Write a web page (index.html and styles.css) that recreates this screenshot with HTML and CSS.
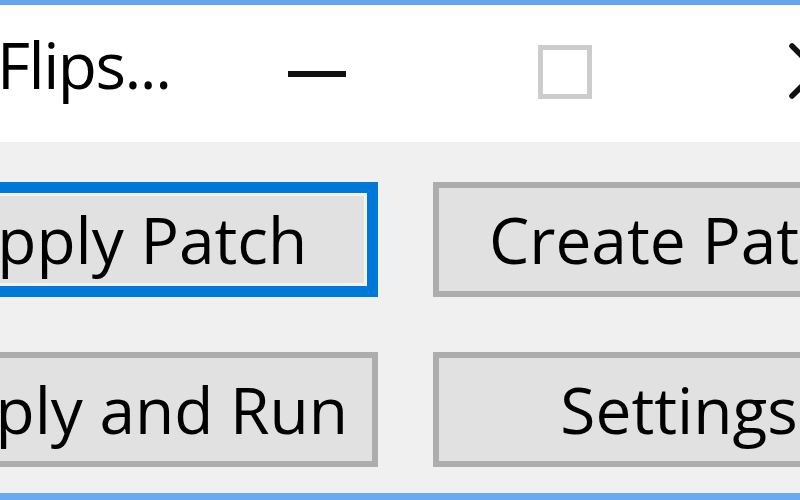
FILE: index.html
```html
<!DOCTYPE html>
<html>
<head>
<meta charset="utf-8">
<link rel="stylesheet" href="styles.css">
</head>
<body>
<div class="window">
  <div class="titlebar">
    <div class="title">Flips...</div>
    <div class="caption">
      <svg class="glyph-min" width="58" height="6" viewBox="0 0 58 6"><rect width="58" height="6" fill="#111"/></svg>
    </div>
    <div class="caption">
      <svg class="glyph-max" width="54" height="54" viewBox="0 0 54 54"><rect x="2.5" y="2.5" width="49" height="49" fill="none" stroke="#cccccc" stroke-width="5"/></svg>
    </div>
    <div class="caption">
      <svg class="glyph-close" width="56" height="56" viewBox="0 0 56 56"><path d="M3 3 L53 53 M53 3 L3 53" stroke="#111" stroke-width="5.5" stroke-linecap="round"/></svg>
    </div>
  </div>
  <div class="content">
    <button class="btn btn-default">Apply Patch</button>
    <button class="btn">Create Patch</button>
    <button class="btn">Apply and Run</button>
    <button class="btn">Settings</button>
  </div>
</div>
</body>
</html>
```

FILE: styles.css
```css
html, body {
  margin: 0;
  padding: 0;
}
body {
  width: 800px;
  height: 500px;
  overflow: hidden;
  background: #f0f0f0;
}
.window {
  width: 1077px;
  margin-left: -140px;
  height: 500px;
  box-sizing: border-box;
  border-top: 5px solid #63a6ee;
  border-bottom: 7px solid #6aaaf0;
  background: #f0f0f0;
  display: flex;
  flex-direction: column;
  font-family: "Open Sans", "Noto Sans", sans-serif;
  color: #000;
}
.titlebar {
  height: 137px;
  background: #ffffff;
  display: flex;
  align-items: center;
}
.title {
  flex: 1;
  padding-left: 137px;
  font-size: 64px;
  line-height: 1;
  letter-spacing: -1.5px;
  margin-bottom: 18px;
}
.caption {
  width: 248px;
  height: 137px;
  display: flex;
  align-items: center;
  justify-content: center;
}
.glyph-max {
  margin-bottom: 4px;
}
.glyph-close {
  margin-left: 8px;
  margin-bottom: 6px;
}
.content {
  flex: 1;
  display: grid;
  grid-template-columns: 492px 492px;
  grid-auto-rows: 115px;
  column-gap: 55px;
  row-gap: 55px;
  padding: 40px 0 0 26px;
  align-content: start;
}
.btn {
  box-sizing: border-box;
  margin: 0;
  padding: 0;
  background: #e1e1e1;
  border: 6px solid #adadad;
  font-family: "Open Sans", "Noto Sans", sans-serif;
  font-size: 64px;
  color: #000;
  display: flex;
  align-items: center;
  justify-content: center;
  white-space: nowrap;
}
.btn-default {
  border: 11px solid #0078d7;
  box-shadow: inset 0 0 0 3px #f2f2f2;
}
```
